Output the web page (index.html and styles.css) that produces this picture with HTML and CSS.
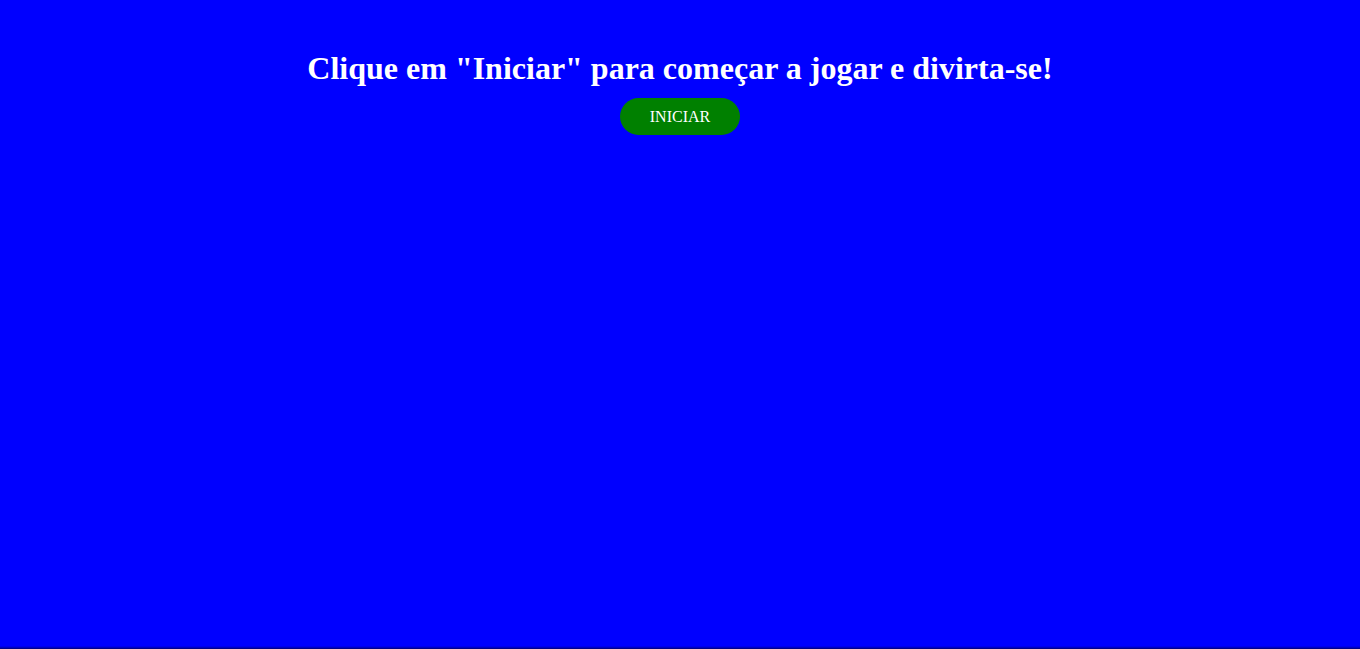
FILE: index.html
```html
<!DOCTYPE html>
<html lang="pt">
<head>
<meta charset="utf-8">
<title>Jogo</title>
<link rel="stylesheet" href="styles.css">
</head>
<body>
<main class="tela">
  <h1 class="titulo">Clique em "Iniciar" para começar a jogar e divirta-se!</h1>
  <button class="botao-iniciar">INICIAR</button>
</main>
</body>
</html>
```
FILE: styles.css
```css
html, body {
  margin: 0;
  padding: 0;
  height: 100%;
}
html {
  background: #0000ff;
}
body {
  background: linear-gradient(to bottom, #0000ff calc(100% - 3px), #0000b0 calc(100% - 1px), #000070 100%);
  font-family: "Liberation Serif", "Times New Roman", serif;
}
.tela {
  display: flex;
  flex-direction: column;
  align-items: center;
  padding-top: 50px;
}
.titulo {
  margin: 0 0 11px 0;
  font-size: 32px;
  font-weight: bold;
  color: #ffffff;
  text-align: center;
  line-height: 37px;
}
.botao-iniciar {
  width: 120px;
  height: 37px;
  border: none;
  border-radius: 19px;
  background: #008000;
  color: #ffffff;
  font-family: "Liberation Serif", "Times New Roman", serif;
  font-size: 16px;
  padding: 0;
  cursor: pointer;
}
```
